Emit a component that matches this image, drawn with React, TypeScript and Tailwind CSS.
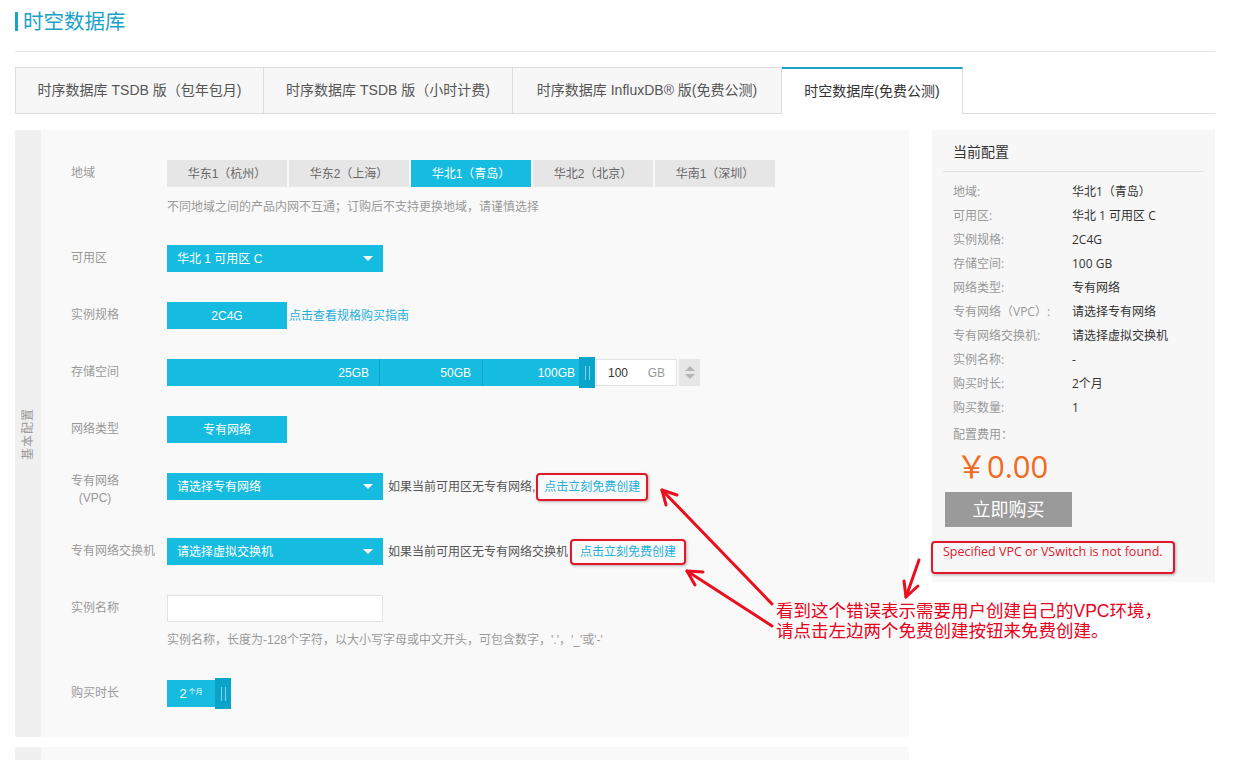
import React from 'react';

const Caret = () => (
  <span className="ml-auto mr-[10px] w-0 h-0 border-l-[5px] border-r-[5px] border-t-[5px] border-l-transparent border-r-transparent border-t-white" />
);

const Handle = () => (
  <div className="w-[16px] h-[31px] bg-[#0aa3ca] flex items-center justify-center gap-[3px] shrink-0">
    <span className="w-px h-[14px] bg-[#7fd3ea]" />
    <span className="w-px h-[14px] bg-[#7fd3ea]" />
  </div>
);

const Label = ({ children }: { children: React.ReactNode }) => (
  <div className="w-[96px] shrink-0 text-[12px] leading-[27px] text-[#999]">{children}</div>
);

const regions = ['华东1（杭州）', '华东2（上海）', '华北1（青岛）', '华北2（北京）', '华南1（深圳）'];

const summary: [string, string][] = [
  ['地域:', '华北1（青岛）'],
  ['可用区:', '华北 1 可用区 C'],
  ['实例规格:', '2C4G'],
  ['存储空间:', '100 GB'],
  ['网络类型:', '专有网络'],
  ['专有网络（VPC）:', '请选择专有网络'],
  ['专有网络交换机:', '请选择虚拟交换机'],
  ['实例名称:', '-'],
  ['购买时长:', '2个月'],
  ['购买数量:', '1'],
];

export default function App() {
  return (
    <div className="relative w-[1239px] h-[760px] overflow-hidden bg-white font-['Liberation_Sans','Noto_Sans_CJK_SC',sans-serif] text-[#333]">
      <div className="ml-[15px] w-[1200px]">
        {/* Header */}
        <div className="h-[52px] border-b border-[#e5e5e5] pt-[11px]">
          <div className="flex items-center">
            <span className="w-[3px] h-[19px] bg-[#1aa3c8]" />
            <span className="ml-[5px] text-[20.5px] leading-[21px] text-[#1aa3c8]">时空数据库</span>
          </div>
        </div>

        {/* Tabs */}
        <div className="mt-[15px] h-[47px] flex text-[14px]">
          <div className="w-[249px] border border-[#ddd] bg-[#f7f7f7] flex items-center justify-center text-[#555]">时序数据库 TSDB 版（包年包月)</div>
          <div className="w-[249px] border-y border-r border-[#ddd] bg-[#f7f7f7] flex items-center justify-center text-[#555]">时序数据库 TSDB 版（小时计费)</div>
          <div className="w-[269px] border-y border-r border-[#ddd] bg-[#f7f7f7] flex items-center justify-center text-[#555]">时序数据库 InfluxDB® 版(免费公测)</div>
          <div className="w-[181px] border-r border-[#ddd] border-t-2 border-t-[#1aa3c8] bg-white flex items-center justify-center text-[#333]">时空数据库(免费公测)</div>
          <div className="flex-1 border-b border-[#ddd]" />
        </div>

        {/* Body */}
        <div className="mt-[16px] flex items-start gap-[23px]">
          <div className="w-[894px] flex flex-col">
            <div className="h-[607px] flex">
              <div className="w-[26px] bg-[#f0f0f0] flex items-center justify-center">
                <div className="-rotate-90 whitespace-nowrap text-[12px] text-[#999] tracking-[1px]">基本配置</div>
              </div>
              <div className="flex-1 bg-[#f9f9f9] pl-[30px] pt-[30px] text-[12px]">
                {/* 地域 */}
                <div className="flex">
                  <Label>地域</Label>
                  <div>
                    <div className="flex gap-[2px]">
                      {regions.map((r, i) => (
                        <div
                          key={r}
                          className={
                            i === 2
                              ? 'w-[120px] h-[27px] flex items-center justify-center bg-[#16bbe0] text-white'
                              : 'w-[120px] h-[27px] flex items-center justify-center bg-[#e6e6e6] text-[#666]'
                          }
                        >
                          {r}
                        </div>
                      ))}
                    </div>
                    <div className="mt-[13px] leading-[14px] text-[#999]">不同地域之间的产品内网不互通；订购后不支持更换地域，请谨慎选择</div>
                  </div>
                </div>

                {/* 可用区 */}
                <div className="flex mt-[31px]">
                  <Label>可用区</Label>
                  <div className="w-[216px] h-[27px] bg-[#16bbe0] text-white flex items-center pl-[10px]">
                    华北 1 可用区 C
                    <Caret />
                  </div>
                </div>

                {/* 实例规格 */}
                <div className="flex mt-[30px]">
                  <Label>实例规格</Label>
                  <div className="flex items-center h-[27px]">
                    <div className="w-[120px] h-[27px] bg-[#16bbe0] text-white flex items-center justify-center">2C4G</div>
                    <span className="ml-[2px] text-[#1fb0da]">点击查看规格购买指南</span>
                  </div>
                </div>

                {/* 存储空间 */}
                <div className="flex mt-[30px]">
                  <Label>存储空间</Label>
                  <div className="flex items-center h-[27px]">
                    <div className="flex h-[27px] bg-[#16bbe0] text-white">
                      <div className="w-[213px] flex items-center justify-end pr-[10px] border-r border-[#0fa4c9]">25GB</div>
                      <div className="w-[103px] flex items-center justify-end pr-[11px] border-r border-[#0fa4c9]">50GB</div>
                      <div className="w-[96px] flex items-center justify-end pr-[4px]">100GB</div>
                    </div>
                    <Handle />
                    <div className="ml-[1px] w-[81px] h-[27px] bg-white border border-[#e3e3e3] flex items-center pl-[11px] pr-[11px] text-[#333]">
                      100<span className="ml-auto text-[#999]">GB</span>
                    </div>
                    <div className="ml-[2px] w-[21px] h-[27px] bg-[#e6e6e6] flex flex-col items-center justify-center gap-[3px]">
                      <span className="w-0 h-0 border-l-[5px] border-r-[5px] border-b-[5px] border-l-transparent border-r-transparent border-b-[#b5b5b5]" />
                      <span className="w-0 h-0 border-l-[5px] border-r-[5px] border-t-[5px] border-l-transparent border-r-transparent border-t-[#b5b5b5]" />
                    </div>
                  </div>
                </div>

                {/* 网络类型 */}
                <div className="flex mt-[30px]">
                  <Label>网络类型</Label>
                  <div className="w-[120px] h-[27px] bg-[#16bbe0] text-white flex items-center justify-center">专有网络</div>
                </div>

                {/* 专有网络 VPC */}
                <div className="flex mt-[30px]">
                  <div className="w-[96px] shrink-0 text-[#999]">
                    <div className="w-[48px] text-center leading-[17px]">专有网络<br />(VPC)</div>
                  </div>
                  <div className="flex items-center h-[27px]">
                    <div className="w-[216px] h-[27px] bg-[#16bbe0] text-white flex items-center pl-[10px]">
                      请选择专有网络
                      <Caret />
                    </div>
                    <span className="ml-[5px] text-[#555]">如果当前可用区无专有网络,</span>
                    <span className="ml-[1px] h-[28px] flex items-center px-[6px] border-2 border-[#e0182d] rounded-[4px] text-[#1fb0da] shadow-[1px_1px_3px_rgba(0,0,0,0.3)]">点击立刻免费创建</span>
                  </div>
                </div>

                {/* 交换机 */}
                <div className="flex mt-[31px]">
                  <Label>专有网络交换机</Label>
                  <div className="flex items-center h-[27px]">
                    <div className="w-[216px] h-[27px] bg-[#16bbe0] text-white flex items-center pl-[10px]">
                      请选择虚拟交换机
                      <Caret />
                    </div>
                    <span className="ml-[5px] text-[#555]">如果当前可用区无专有网络交换机</span>
                    <span className="ml-[2px] h-[26px] flex items-center px-[8px] border-2 border-[#e0182d] rounded-[4px] text-[#1fb0da] shadow-[1px_1px_3px_rgba(0,0,0,0.3)]">点击立刻免费创建</span>
                  </div>
                </div>

                {/* 实例名称 */}
                <div className="flex mt-[30px]">
                  <Label>实例名称</Label>
                  <div>
                    <div className="w-[216px] h-[27px] bg-white border border-[#e3e3e3]" />
                    <div className="mt-[11px] leading-[14px] text-[#999]">实例名称，长度为-128个字符，以大小写字母或中文开头，可包含数字，'.'，'_'或'-'</div>
                  </div>
                </div>

                {/* 购买时长 */}
                <div className="flex mt-[33px]">
                  <Label>购买时长</Label>
                  <div className="flex items-center h-[27px]">
                    <div className="w-[48px] h-[27px] bg-[#16bbe0] text-white flex items-center justify-center">
                      <span className="text-[13px]">2</span>
                      <span className="text-[7px] ml-[2px] -mt-[3px]">个月</span>
                    </div>
                    <Handle />
                  </div>
                </div>
              </div>
            </div>
            <div className="mt-[10px] h-[100px] flex">
              <div className="w-[26px] bg-[#f0f0f0]" />
              <div className="flex-1 bg-[#f9f9f9]" />
            </div>
          </div>

          {/* Right summary */}
          <div className="w-[283px] h-[452px] bg-[#f7f7f7] px-[11px] font-['Open_Sans','Noto_Sans_CJK_SC',sans-serif]">
            <div className="h-[42px] pt-[12px] pl-[10px] border-b border-[#e0e0e0] text-[14px] leading-[20px] text-[#333]">当前配置</div>
            <div className="mt-[8px] pl-[10px] text-[12px]">
              {summary.map(([k, v]) => (
                <div key={k} className="flex leading-[24px]">
                  <div className="w-[119px] text-[#999]">{k}</div>
                  <div className="text-[#333]">{v}</div>
                </div>
              ))}
              <div className="mt-[3px] leading-[24px] text-[#999]">配置费用：</div>
            </div>
            <div className="mt-[1px] pl-[13px] text-[31px] leading-[36px] text-[#f26b22]">￥0.00</div>
            <div className="mt-[8px] ml-[2px] w-[127px] h-[35px] bg-[#9a9a9a] text-white text-[18px] flex items-center justify-center">立即购买</div>
            <div className="mt-[14px] -ml-[12px] w-[244px] h-[33px] border-2 border-[#e0182d] rounded-[4px] pl-[10px] pt-[1px] text-[12.5px] leading-[16px] text-[#e0182d] bg-[#f7f7f7] shadow-[1px_1px_3px_rgba(0,0,0,0.3)]">
              Specified VPC or VSwitch is not found.
            </div>
          </div>
        </div>
      </div>

      {/* Annotation arrows */}
      <svg className="absolute left-0 top-0 pointer-events-none" width="1239" height="760">
        <g stroke="#e8101f" strokeWidth="3" fill="none" strokeLinecap="round" strokeLinejoin="round">
          <line x1="772" y1="604" x2="662" y2="490" />
          <polyline points="677,495 662,490 666,505" />
          <line x1="772" y1="626" x2="687" y2="571" />
          <polyline points="703,572 687,571 695,585" />
          <line x1="919" y1="560" x2="906" y2="597" />
          <polyline points="918,586 906,597 904,581" />
        </g>
      </svg>
      <div className="absolute left-[776px] top-[601px] text-[17.5px] leading-[20px] text-[#e8001c] whitespace-nowrap">
        看到这个错误表示需要用户创建自己的VPC环境，<br />
        请点击左边两个免费创建按钮来免费创建。
      </div>
    </div>
  );
}
